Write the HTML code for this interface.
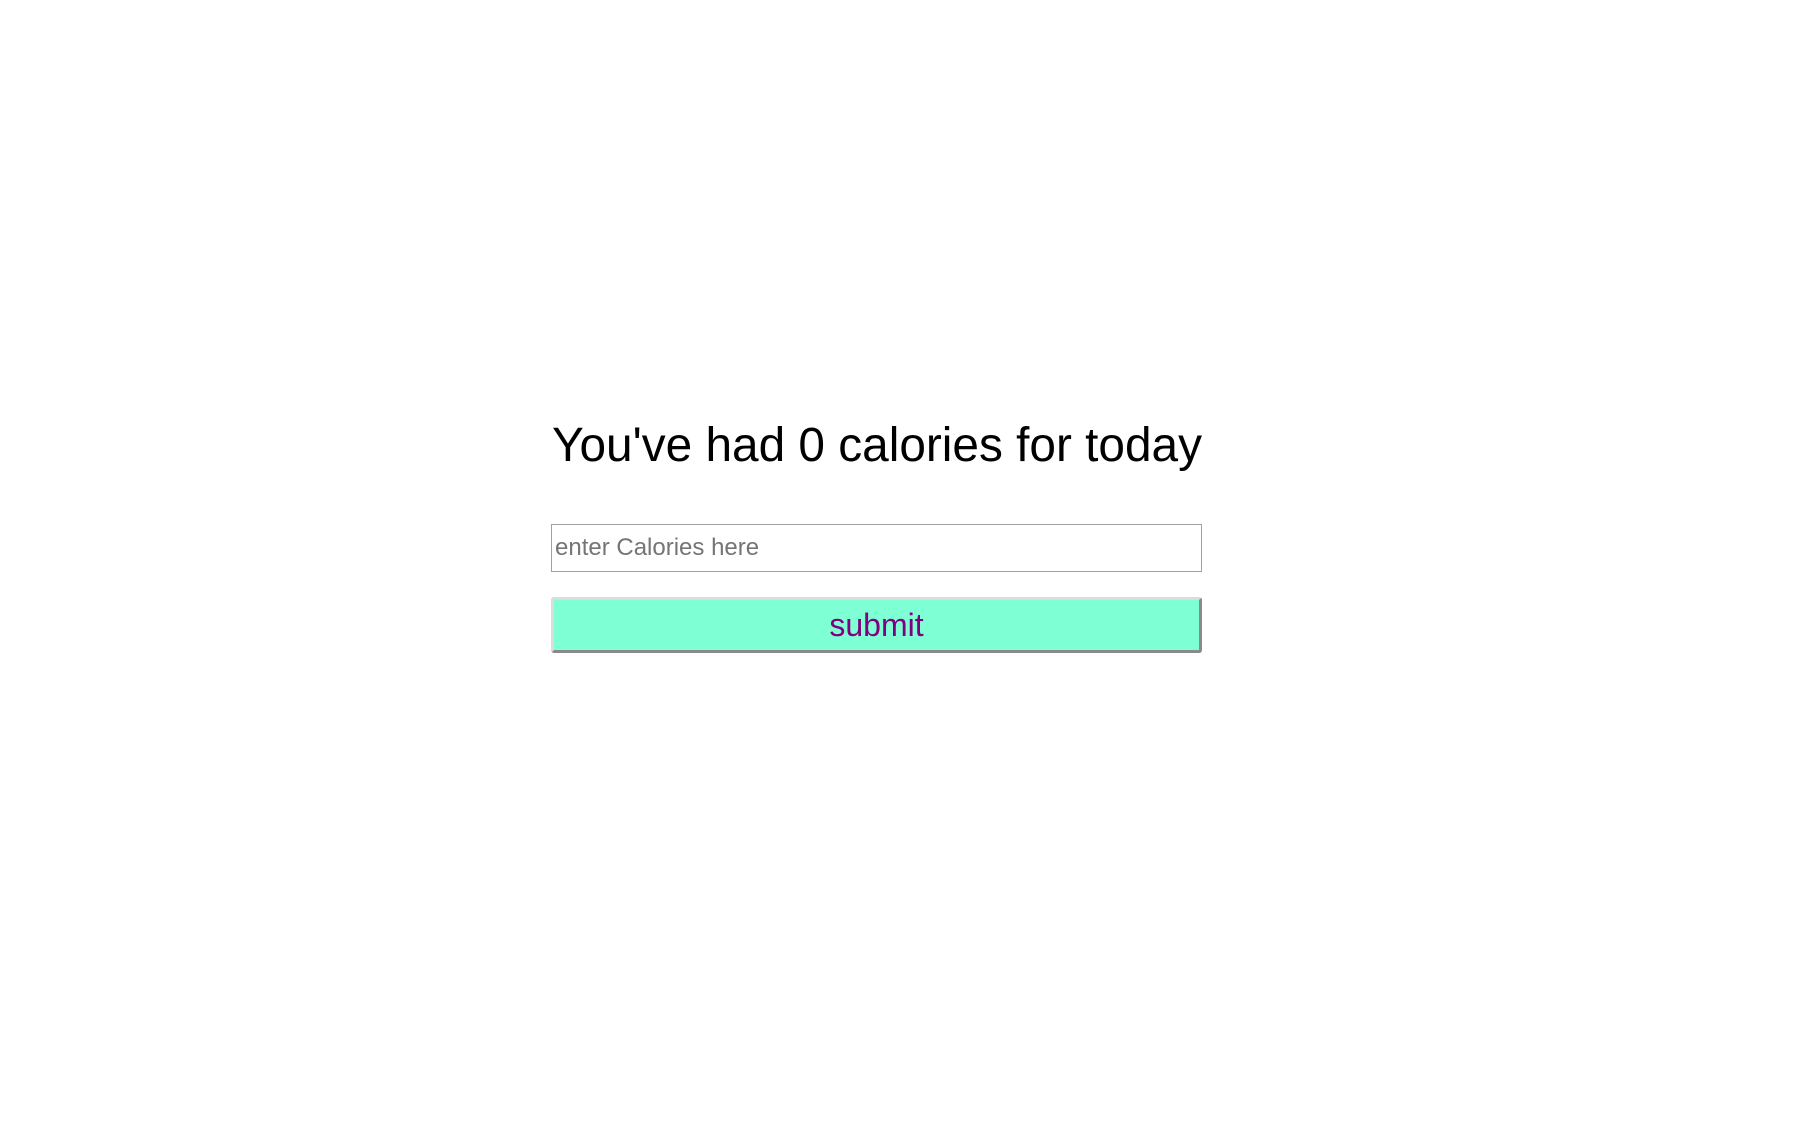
<!DOCTYPE html>
<html><head><meta charset="utf-8"><style>
html,body{margin:0;padding:0;background:#fff;width:1807px;height:1123px;overflow:hidden}
.h{position:absolute;left:552px;top:418px}
.inp{position:absolute;left:551px;top:524px;width:649px;height:46px;border:1px solid #a0a0a0;box-sizing:content-box}
.inp span{position:absolute;left:3px;top:9px;font:24px "Liberation Sans",sans-serif;color:#757575}
.btn{position:absolute;left:551px;top:597px;width:651px;height:56px;box-sizing:border-box;background:#7fffd4;border:3px solid;border-color:#dcdcdc #8a8a8a #8a8a8a #dcdcdc;border-radius:3px;text-align:center;font:32px/50px "Liberation Sans",sans-serif;color:#800080}
</style></head><body>
<svg class="h" width="670" height="60"><text x="0" y="43" font-family="Liberation Sans, sans-serif" font-size="48" fill="#000" textLength="650" lengthAdjust="spacingAndGlyphs">You've had 0 calories for today</text></svg>
<div class="inp"><span>enter Calories here</span></div>
<div class="btn">submit</div>
</body></html>
